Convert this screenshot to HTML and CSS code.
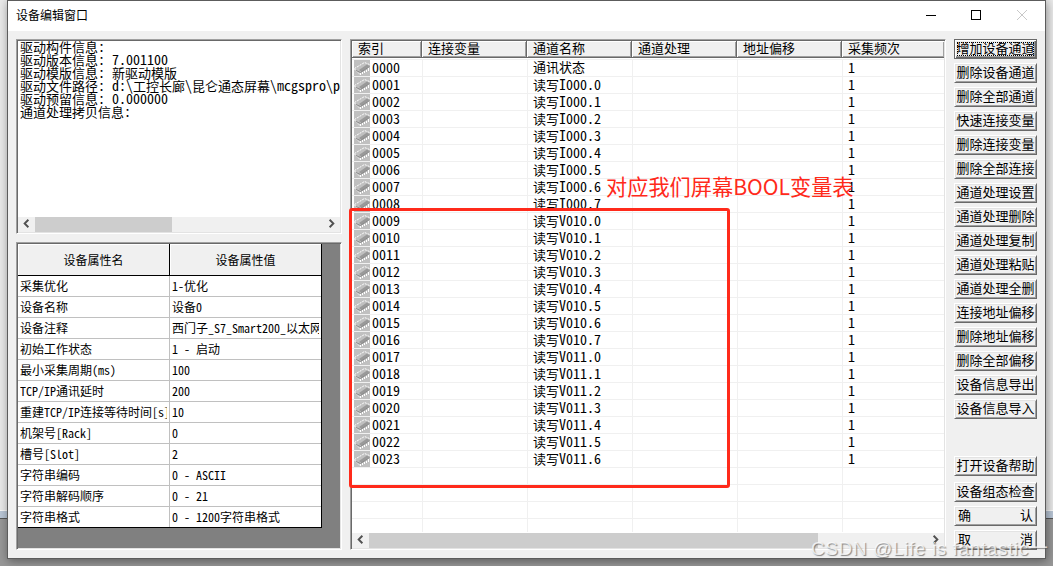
FILE: index.html
```html
<!DOCTYPE html>
<html lang="zh-CN">
<head>
<meta charset="UTF-8">
<title>设备编辑窗口</title>
<link rel="stylesheet" href="styles.css">
</head>
<body>

<svg class="defs" width="0" height="0">
  <symbol id="chip" viewBox="0 0 16 16">
    <rect width="16" height="16" fill="#c0c0c0"/>
    <path d="M5 10L13 4.5L15.5 6L7.5 12Z" fill="#999"/>
    <path d="M0.5 8.5L10.5 2.5L15.5 4.5" fill="none" stroke="#fff" stroke-dasharray="2 1"/>
    <path d="M0.5 9L6 14.5" fill="none" stroke="#fff" stroke-dasharray="2 1"/>
    <path d="M2 10.5L6.5 12.5L15.5 6.5" fill="none" stroke="#8a8a8a"/>
    <path d="M6.5 13V15M8.5 12V14M10.5 11V13M12.5 10V12M14.5 8V11" stroke="#fff"/>
  </symbol>
  <symbol id="left" viewBox="0 0 16 16"><path d="M10 4L6 8L10 12" fill="none" stroke="#505050" stroke-width="2"/></symbol>
  <symbol id="right" viewBox="0 0 16 16"><path d="M6 4L10 8L6 12" fill="none" stroke="#505050" stroke-width="2"/></symbol>
</svg>

<div class="window">
  <div class="titlebar">
    <span class="title">设备编辑窗口</span>
    <svg class="controls" width="104" height="12" viewBox="0 0 104 12" fill="none">
      <path d="M0 5.5H10" stroke="#000"/>
      <rect x="45.5" y="0.5" width="9" height="9" stroke="#000"/>
      <path d="M91 0L101 10M101 0L91 10" stroke="#c8c8c8"/>
    </svg>
  </div>

  <div class="content">
    <div class="left">
      <div class="info sunken">
        <div class="info-text">
          <p>驱动构件信息<i>:</i></p>
          <p>驱动版本信息<i>: 7.001100</i></p>
          <p>驱动模版信息<i>: </i>新驱动模版</p>
          <p>驱动文件路径<i>: d:\</i>工控长廊<i>\</i>昆仑通态屏幕<i>\mcgspro\p</i></p>
          <p>驱动预留信息<i>: 0.000000</i></p>
          <p>通道处理拷贝信息<i>:</i></p>
        </div>
        <div class="scrollbar">
          <svg width="17" height="15"><use href="#left"/></svg>
          <span class="thumb small"></span>
          <svg class="end" width="17" height="15"><use href="#right"/></svg>
        </div>
      </div>

      <div class="props sunken">
        <div class="prop-grid" id="props">
          <div class="head">设备属性名</div><div class="head">设备属性值</div>
        </div>
      </div>
    </div>

    <div class="channels sunken">
      <div class="list-head">
        <span>索引</span><span>连接变量</span><span>通道名称</span><span>通道处理</span><span>地址偏移</span><span>采集频次</span>
      </div>
      <div class="list-body" id="list"></div>
      <div class="scrollbar">
        <svg width="17" height="15"><use href="#left"/></svg>
        <span class="thumb big"></span>
        <svg class="end" width="17" height="15"><use href="#right"/></svg>
      </div>
    </div>

    <div class="buttons">
      <button class="default">增加设备通道</button>
      <button>删除设备通道</button>
      <button>删除全部通道</button>
      <button>快速连接变量</button>
      <button>删除连接变量</button>
      <button>删除全部连接</button>
      <button>通道处理设置</button>
      <button>通道处理删除</button>
      <button>通道处理复制</button>
      <button>通道处理粘贴</button>
      <button>通道处理全删</button>
      <button>连接地址偏移</button>
      <button>删除地址偏移</button>
      <button>删除全部偏移</button>
      <button>设备信息导出</button>
      <button>设备信息导入</button>
      <button class="help">打开设备帮助</button>
      <button class="check">设备组态检查</button>
      <button class="spread"><span>确</span><span>认</span></button>
      <button class="spread"><span>取</span><span>消</span></button>
    </div>
  </div>
</div>

<div class="mark-box"></div>
<div class="mark-text">对应我们屏幕BOOL变量表</div>
<div class="watermark">CSDN @Life is fantastic一</div>

<script>
// wrap half-width characters so they sit on the same pitch
function half(s) {
  return s.replace(/[\x20-\x7e]+/g, m => `<i>${m}</i>`);
}

const props = [
  ["采集优化", "1-优化"],
  ["设备名称", "设备0"],
  ["设备注释", "西门子_S7_Smart200_以太网"],
  ["初始工作状态", "1 - 启动"],
  ["最小采集周期(ms)", "100"],
  ["TCP/IP通讯延时", "200"],
  ["重建TCP/IP连接等待时间[s]", "10"],
  ["机架号[Rack]", "0"],
  ["槽号[Slot]", "2"],
  ["字符串编码", "0 - ASCII"],
  ["字符串解码顺序", "0 - 21"],
  ["字符串格式", "0 - 1200字符串格式"]
];
document.getElementById("props").innerHTML += props.map(p =>
  `<div class="cell"><span>${half(p[0])}</span></div><div class="cell"><span>${half(p[1])}</span></div>`).join("");

// channel names
const names = ["通讯状态"];
for (let i = 0; i < 8; i++) names.push("读写I000." + i);
for (let i = 0; i < 8; i++) names.push("读写V010." + i);
for (let i = 0; i < 7; i++) names.push("读写V011." + i);

let rows = "";
for (let i = 0; i < 28; i++) {
  if (i < names.length) {
    rows += `<div class="row"><span class="idx"><svg width="16" height="16"><use href="#chip"/></svg><i>${String(i).padStart(4, "0")}</i></span>
      <span></span><span>${half(names[i])}</span><span></span><span></span><span><i>1</i></span></div>`;
  } else {
    rows += `<div class="row">${"<span></span>".repeat(6)}</div>`;
  }
}
document.getElementById("list").innerHTML = rows;
</script>

</body>
</html>
```
FILE: styles.css
```css
* {
  box-sizing: border-box;
}
body {
  margin: 0;
  height: 566px;
  overflow: hidden;
  position: relative;
  padding-left: 7px;
  font-family: "Noto Sans CJK SC", sans-serif;
  font-size: 13px;
  color: #000;
  background: linear-gradient(#e9e9e9 0 510px, #f8f8f8 510px 511px, #b9c6d6 511px 518px, #555 518px 519px, #979797 519px);
}
i {
  font-style: normal;
  font-size: 14px;
  font-feature-settings: "hwid" 1;
  white-space: pre;
}
.defs {
  position: absolute;
}
.window {
  width: 1039px;
  height: 559px;
  background: #f0f0f0;
  border: 1px solid #5c5c5c;
  box-shadow: 1px 2px 9px rgba(0,0,0,0.4);
}
.titlebar {
  height: 30px;
  background: #fff;
  display: flex;
  align-items: center;
  justify-content: space-between;
  padding: 0 15px 0 8px;
}
.title {
  font-size: 12px;
  line-height: 16px;
  padding-bottom: 2px;
}
.content {
  display: flex;
  padding: 8px 0 0 8px;
}
.sunken {
  border: 1px solid;
  border-color: #a0a0a0 #fff #fff #a0a0a0;
  box-shadow: inset 1px 1px #696969, inset -1px -1px #e3e3e3;
  padding: 1px;
  background: #fff;
}
.left {
  width: 326px;
  display: flex;
  flex-direction: column;
  gap: 8px;
}
.info {
  height: 195px;
  display: flex;
  flex-direction: column;
}
.info-text {
  flex: 1;
  overflow: hidden;
  padding-left: 2px;
}
.info-text p {
  margin: 0;
  height: 13px;
  line-height: 11px;
  white-space: nowrap;
}
.info-text i {
  line-height: 11px;
}
.scrollbar {
  height: 15px;
  background: #f0f0f0;
  display: flex;
}
.scrollbar svg {
  margin-top: -1px;
}
.thumb {
  background: #cdcdcd;
}
.thumb.small {
  width: 137px;
}
.thumb.big {
  width: 449px;
}
.scrollbar .end {
  margin-left: auto;
}
.props {
  height: 308px;
  background: #808080;
}
.prop-grid {
  width: 304px;
  display: grid;
  grid-template-columns: 152px 151px;
  font-size: 12px;
  background: #fff;
  border-right: 1px solid #000;
  border-bottom: 1px solid #000;
}
.prop-grid i {
  font-size: 12px;
}
.head {
  height: 32px;
  line-height: 31px;
  text-align: center;
  background: #f0f0f0;
  border-right: 1px solid #000;
  border-bottom: 1px solid #000;
  box-shadow: inset 1px 1px #fff;
}
.head:nth-child(2) {
  border-right: 0;
}
.cell {
  height: 21px;
  line-height: 19px;
  padding: 0 2px;
  border-right: 1px solid #c0c0c0;
  border-bottom: 1px solid #c0c0c0;
  white-space: nowrap;
}
.cell:nth-child(even) {
  border-right: 0;
}
.cell:nth-last-child(-n+2) {
  height: 20px;
  border-bottom: 0;
}
.cell span {
  display: block;
  overflow: hidden;
}
.channels {
  width: 596px;
  height: 511px;
  margin-left: 8px;
  display: flex;
  flex-direction: column;
}
.list-head, .row {
  display: grid;
  grid-template-columns: 70px 105px 105px 105px 105px 102px;
}
.list-head span {
  height: 17px;
  line-height: 14px;
  padding-left: 6px;
  background: #f0f0f0;
  border-right: 1px solid #696969;
  border-bottom: 1px solid #696969;
  box-shadow: inset 1px 1px #fff, inset -1px -1px #a0a0a0;
}
.list-head span:last-child {
  border-right: 0;
}
.list-body {
  flex: 1;
  overflow: hidden;
  margin-top: 1px;
  border-top: 1px solid #f0f0f0;
  margin-bottom: 1px;
}
.row span {
  height: 17px;
  line-height: 14px;
  padding-left: 6px;
  border-left: 1px solid #f0f0f0;
  border-bottom: 1px solid #f0f0f0;
  white-space: nowrap;
}
.row i {
  line-height: 14px;
}
.row .idx {
  display: flex;
  gap: 2px;
}
.row span:first-child {
  padding-left: 2px;
  border-left: 0;
}
.row span:nth-child(n+2) {
  padding-left: 5px;
}
.buttons {
  width: 83px;
  margin-left: 8px;
  display: flex;
  flex-direction: column;
  gap: 4px;
}
button {
  height: 20px;
  padding: 0 0 3px;
  font: 13px/15px "Noto Sans CJK SC", sans-serif;
  color: #000;
  white-space: nowrap;
  background: #f0f0f0;
  border: 1px solid;
  border-color: #fff #696969 #696969 #fff;
  box-shadow: inset 1px 1px #e3e3e3, inset -1px -1px #a0a0a0;
}
.default {
  border-color: #696969;
  box-shadow: inset 1px 1px #fff, inset -1px -1px #696969, inset -2px -2px #a0a0a0;
  outline: 1px dotted #000;
  outline-offset: -4px;
}
.help {
  margin-top: 33px;
}
.check {
  margin-top: 2px;
}
.spread {
  display: flex;
  justify-content: space-between;
  padding: 0 3px;
}
.mark-box {
  position: absolute;
  left: 349px;
  top: 208px;
  width: 381px;
  height: 280px;
  border: 3px solid #ff2a1b;
  border-radius: 3px;
}
.mark-text {
  position: absolute;
  left: 606px;
  top: 171px;
  font-size: 21.2px;
  line-height: 30px;
  color: #ff2a1b;
  white-space: nowrap;
}
.watermark {
  position: absolute;
  left: 811px;
  top: 538px;
  font-family: "Liberation Sans", "Noto Sans CJK SC", sans-serif;
  font-size: 19px;
  letter-spacing: 0.6px;
  line-height: 22px;
  white-space: nowrap;
  color: rgba(255,255,255,0.75);
  text-shadow: 1px 1px 1px rgba(90,90,90,0.7);
}
```
